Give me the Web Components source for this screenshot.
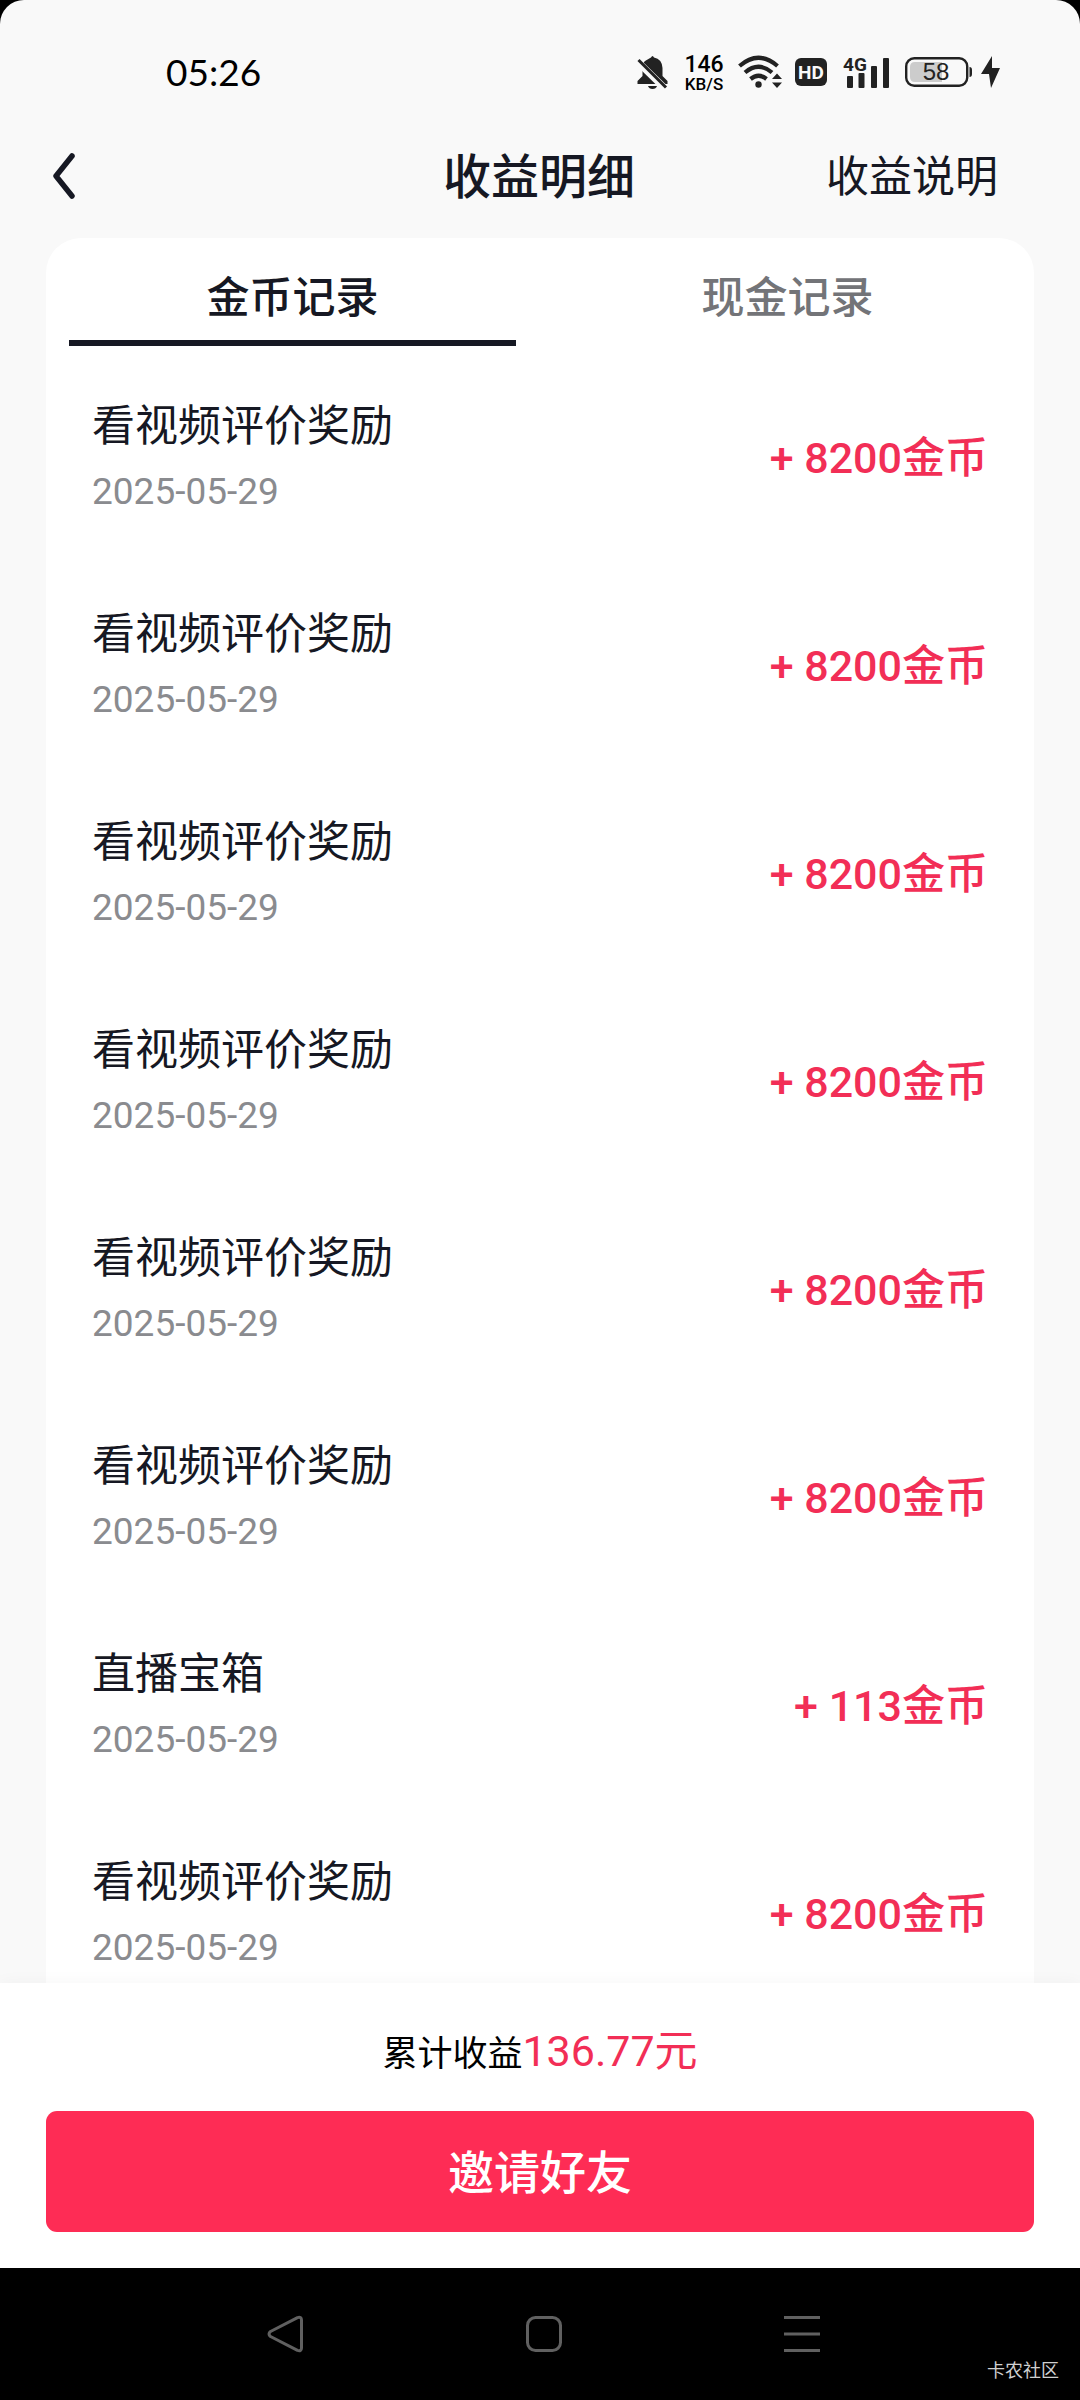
<!DOCTYPE html>
<html lang="zh-CN">
<head>
<meta charset="utf-8">
<meta name="viewport" content="width=device-width, initial-scale=1">
<title>收益明细</title>
<style>
  html, body { margin: 0; height: 100%; background: #000; }
  body { font-family: Roboto, "Noto Sans CJK SC", sans-serif; color: #161823; }
</style>
</head>
<body>
<earnings-page>
  <status-bar slot="status" time="05:26"></status-bar>
  <page-header slot="header"><span>收益明细</span><a slot="action" href="#help">收益说明</a></page-header>
  <record-card slot="content">
    <tab-item slot="tabs" selected>金币记录</tab-item>
    <tab-item slot="tabs">现金记录</tab-item>
    <record-row date="2025-05-29" amount="+ 8200金币">看视频评价奖励</record-row>
    <record-row date="2025-05-29" amount="+ 8200金币">看视频评价奖励</record-row>
    <record-row date="2025-05-29" amount="+ 8200金币">看视频评价奖励</record-row>
    <record-row date="2025-05-29" amount="+ 8200金币">看视频评价奖励</record-row>
    <record-row date="2025-05-29" amount="+ 8200金币">看视频评价奖励</record-row>
    <record-row date="2025-05-29" amount="+ 8200金币">看视频评价奖励</record-row>
    <record-row date="2025-05-29" amount="+ 113金币">直播宝箱</record-row>
    <record-row date="2025-05-29" amount="+ 8200金币">看视频评价奖励</record-row>
  </record-card>
  <invite-footer slot="footer" total="136.77元">邀请好友</invite-footer>
  <system-nav slot="nav">卡农社区</system-nav>
</earnings-page>

<script>
const define = (name, html, setup) => {
  const template = document.createElement('template');
  template.innerHTML = html;
  customElements.define(name, class extends HTMLElement {
    constructor() {
      super();
      this.attachShadow({ mode: 'open' }).append(template.content.cloneNode(true));
    }
    connectedCallback() { if (setup) setup(this, this.shadowRoot); }
  });
};

define('earnings-page', `
  <style>
    :host { display: flex; flex-direction: column; height: 100vh; }
    .screen { flex: 1; min-height: 0; display: flex; flex-direction: column; overflow: hidden;
      background: #f9f9f9; border-radius: 24px 24px 0 0; }
    main { flex: 1; min-height: 0; overflow: hidden; padding: 0 46px; }
  </style>
  <div class="screen">
    <slot name="status"></slot>
    <slot name="header"></slot>
    <main><slot name="content"></slot></main>
    <slot name="footer"></slot>
  </div>
  <slot name="nav"></slot>`);

define('status-bar', `
  <style>
    :host { display: flex; align-items: center; justify-content: space-between; height: 64px;
      padding: 40px 80px 10px 166px; color: #222; }
    time { font: 37px/44px Lato, sans-serif; color: #000; }
    .icons { display: flex; align-items: center; }
    .speed { display: flex; flex-direction: column; align-items: center; width: 40px; margin: 0 14px 0 16px;
      color: #000; font: 500 17px/16px Roboto, sans-serif; }
    .speed b { font-size: 23px; line-height: 23px; font-weight: 500; }
    svg { display: block; fill: currentColor; }
    text { font-family: Roboto, sans-serif; }
    .wifi { margin-right: 13px; }
    .hd { margin-right: 16px; }
    .cell { margin-right: 15px; }
    .battery { margin-right: 9px; }
    .battery text { font-family: "Liberation Sans", sans-serif; }
  </style>
  <time></time>
  <div class="icons">
    <svg width="31" height="36" viewBox="0 0 31 36"><path d="M14 3.5Q15.500 .5 17 3.500Q25 5 25.500 14V22L30.500 27V30H.5V27L5.500 22V14Q5.500 9 8 7Z"/><path d="M11 32H20Q19 35 15.500 35Q12 35 11 32Z"/><path d="M.5 7.500L27.500 34" stroke="#f9f9f9" stroke-width="7"/><path d="M1.500 6L29 33.500" stroke="currentColor" stroke-width="3"/></svg>
    <div class="speed"><b>146</b><span>KB/S</span></div>
    <svg class="wifi" width="44" height="36" viewBox="0 0 44 36"><g fill="none" stroke="currentColor" stroke-width="4.200"><path d="M1.500 12Q20.500-4.500 39.500 12"/><path d="M7 18.500Q20.500 7 34 18.500"/><path d="M12.500 25Q20.500 18.500 28.500 25"/></g><circle cx="20.500" cy="30.500" r="3.200"/><path d="M34 25L39 19.500L44 25ZM34 28.500H44L39 34Z"/></svg>
    <svg class="hd" width="32" height="28" viewBox="0 0 32 28"><rect width="32" height="28" rx="6"/><text x="16" y="21" text-anchor="middle" font-size="19" font-weight="700" fill="#f9f9f9">HD</text></svg>
    <svg class="cell" width="47" height="36" viewBox="0 0 47 36"><text x="0" y="17" font-size="19" font-weight="700">4G</text><rect x="4" y="22" width="6" height="12" rx="1"/><rect x="15.500" y="19" width="6" height="15" rx="1"/><rect x="28" y="12" width="6" height="22" rx="1"/><rect x="40" y="4" width="6" height="30" rx="1"/></svg>
    <svg class="battery" width="67" height="30" viewBox="0 0 67 30"><rect x="1.200" y="1.200" width="61" height="27.600" rx="8" fill="none" stroke="currentColor" stroke-width="2.400"/><path d="M10 5H37V25H10Q5 25 5 20V10Q5 5 10 5Z" fill="#ccc"/><path d="M64.500 10Q67 10 67 13V17Q67 20 64.500 20Z"/><text x="31" y="23" text-anchor="middle" font-size="24">58</text></svg>
    <svg width="19" height="32" viewBox="0 0 19 32"><path d="M11 0L0 18H8L10 32L19 12H11Z"/></svg>
  </div>`, (el, root) => { root.querySelector('time').textContent = el.getAttribute('time'); });

define('page-header', `
  <style>
    :host { display: grid; grid-template-columns: 1fr auto 1fr; align-items: center; height: 124px; padding: 0 82px 0 44px; }
    button { justify-self: start; border: 0; padding: 8px; background: none; color: #161823; }
    svg { display: block; }
    h1 { margin: 0; padding: 4px 0 0 36px; font-size: 48px; line-height: 72px; font-weight: 500; }
    .action { justify-self: end; padding-top: 2px; font-size: 43px; line-height: 64px; }
    ::slotted(a) { color: #161823; text-decoration: none; }
  </style>
  <button type="button" aria-label="返回"><svg width="24" height="46" viewBox="0 0 24 46" fill="none" stroke="currentColor" stroke-width="5.500" stroke-linecap="round" stroke-linejoin="round"><path d="M20 3L4 23L20 43"/></svg></button>
  <h1><slot></slot></h1>
  <div class="action"><slot name="action"></slot></div>`);

define('record-card', `
  <style>
    :host { display: block; background: #fff; border-radius: 35px 35px 0 0; }
    .tabs { display: flex; gap: 48px; padding: 0 23px 7px; }
  </style>
  <div class="tabs" role="tablist"><slot name="tabs"></slot></div>
  <div role="list"><slot></slot></div>`);

define('tab-item', `
  <style>
    :host { display: block; flex: 1; }
    button { box-sizing: border-box; width: 100%; border: 0; border-bottom: 6px solid transparent; padding: 28px 0 10px;
      background: none; font: inherit; font-size: 43px; line-height: 64px; font-weight: 500; color: #737478; }
    :host([selected]) button { color: #161823; border-bottom-color: #161823; }
  </style>
  <button type="button" role="tab"><slot></slot></button>`,
  (el, root) => root.querySelector('button').setAttribute('aria-selected', el.hasAttribute('selected')));

define('record-row', `
  <style>
    :host { display: flex; align-items: center; justify-content: space-between; height: 208px; padding: 0 46px; }
    .title { font-size: 43px; line-height: 64px; }
    time { display: block; margin-top: 6px; font-size: 37px; line-height: 56px; color: #8a8b8f; }
    .amount { padding-top: 2px; font-size: 43px; line-height: 64px; font-weight: 500; color: #f22e56; }
  </style>
  <div><div class="title"><slot></slot></div><time></time></div>
  <div class="amount"></div>`,
  (el, root) => {
    el.setAttribute('role', 'listitem');
    root.querySelector('time').textContent = el.getAttribute('date');
    root.querySelector('.amount').textContent = el.getAttribute('amount');
  });

define('invite-footer', `
  <style>
    :host { display: block; position: relative; padding: 36px 46px; background: #fff; box-shadow: 0 0 16px rgba(0,0,0,.04); }
    p { display: flex; justify-content: center; align-items: baseline; height: 64px; margin: 0 0 28px; font-size: 35px; line-height: 64px; color: #000; }
    strong { font-size: 43px; font-weight: 400; color: #f22e56; }
    button { display: block; width: 100%; border: 0; border-radius: 11px; padding: 28px 0 25px; background: #fe2c55;
      color: #fff; font: inherit; font-size: 46px; line-height: 68px; font-weight: 500; }
  </style>
  <p>累计收益<strong></strong></p>
  <button type="button"><slot></slot></button>`,
  (el, root) => { root.querySelector('strong').textContent = el.getAttribute('total'); });

define('system-nav', `
  <style>
    :host { display: grid; grid-template-columns: 1fr auto 1fr; align-items: center; height: 132px; padding: 0 21px; background: #000; }
    nav { grid-column: 2; display: flex; gap: 206px; padding-left: 8px; }
    button { border: 0; padding: 6px; background: none; color: #606060; }
    svg { display: block; fill: none; stroke: currentColor; stroke-width: 3; stroke-linejoin: round; }
    small { align-self: end; justify-self: end; padding-bottom: 16px; font-size: 18px; line-height: 26px; color: #d0d0d0; }
  </style>
  <nav>
    <button type="button" aria-label="返回"><svg width="40" height="40" viewBox="0 0 40 40"><path d="M4.500 17.500L31.500 3.600Q35.500 2.500 35.500 6V34Q35.500 37.500 31.500 36.400L4.500 22.500Q1.500 20 4.500 17.500Z"/></svg></button>
    <button type="button" aria-label="主页"><svg width="40" height="40" viewBox="0 0 40 40"><rect x="3.500" y="3.500" width="33" height="33" rx="8"/></svg></button>
    <button type="button" aria-label="菜单"><svg width="40" height="40" viewBox="0 0 40 40"><path d="M2 3.500H38M2 20H38M2 36.500H38"/></svg></button>
  </nav>
  <small><slot></slot></small>`);
</script>
</body>
</html>
